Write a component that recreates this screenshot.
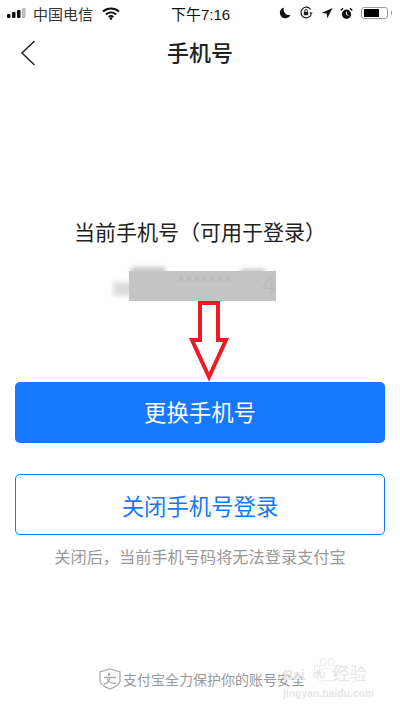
<div class="page">
  <header class="status">
    <div class="side">
      <svg class="signal" width="20" height="12" viewBox="0 0 20 12">
        <rect x="0" y="7" width="3.500" height="4" rx="1" fill="#111"/>
        <rect x="5" y="5" width="3.500" height="6" rx="1" fill="#111"/>
        <rect x="10" y="3" width="3.500" height="8" rx="1" fill="#111"/>
        <rect x="15" y="1" width="3.500" height="10" rx="1" fill="#bbb"/>
      </svg>
      <span class="carrier">中国电信</span>
      <svg class="wifi" width="18" height="13" viewBox="0 0 18 13">
        <path d="M1 4.600C5.600.6 12.400.6 17 4.600M3.900 7.400c3-2.600 7.200-2.600 10.200 0M6.600 10c1.400-1.200 3.400-1.200 4.800 0" fill="none" stroke="#111" stroke-width="2"/>
        <circle cx="9" cy="11.600" r="1.300" fill="#111"/>
      </svg>
    </div>
    <span class="time">下午7:16</span>
    <div class="side right">
      <svg width="12" height="12" viewBox="0 0 12 12"><path d="M5 .5a5.500 5.500 0 1 0 6.500 7.300A5.500 5.500 0 0 1 5 .5z" fill="#111"/></svg>
      <svg class="lock" width="15" height="14" viewBox="0 0 15 14"><path d="M12.200 8.500A5.300 5.300 0 1 1 11.600 3.400" fill="none" stroke="#222" stroke-width="1.200"/><path d="M10.200 6.500h3.600l-1.800 2.300z" fill="#222"/><rect x="4.800" y="5.800" width="4.400" height="3.400" fill="#222"/><path d="M5.700 5.800V4.800a1.300 1.300 0 0 1 2.600 0v1" fill="none" stroke="#222"/></svg>
      <svg width="12" height="12" viewBox="0 0 13 12"><path d="M12.500.5L.5 6l5.500.6.900 5.200z" fill="#111"/></svg>
      <svg width="13" height="13" viewBox="0 0 14 13"><circle cx="7" cy="7.300" r="5" fill="#111"/><path d="M7 4.500v3l2 1" fill="none" stroke="#fff"/><path d="M.8 3.300L3.300.9M13.200 3.300L10.700.9" stroke="#111" stroke-width="1.600"/></svg>
      <div class="battery"><div class="level"></div></div>
      <div class="nub"></div>
    </div>
  </header>

  <nav class="nav">
    <svg class="back" width="16" height="26" viewBox="0 0 16 26"><path d="M14.500 1L2 13l12.500 12" fill="none" stroke="#222" stroke-width="1.500"/></svg>
    <h1>手机号</h1>
  </nav>

  <main class="content">
    <p class="label">当前手机号（可用于登录）</p>
    <div class="masked">
      <div class="smudge left"></div>
      <div class="smudge top"></div>
      <div class="smudge top2"></div>
      <div class="block">
        <span class="stars">*******</span>
        <span class="digit">4</span>
      </div>
    </div>
    <svg class="arrow" width="41" height="84" viewBox="0 0 41 84">
      <path d="M11 3H29V40H37L20 77 3 40H11Z" fill="#fff" stroke="#ed1c24" stroke-width="4"/>
    </svg>
    <button class="btn primary">更换手机号</button>
    <button class="btn outline">关闭手机号登录</button>
    <p class="note">关闭后，当前手机号码将无法登录支付宝</p>
  </main>

  <footer class="foot">
    <svg width="24" height="22" viewBox="0 0 24 22">
      <path d="M12 1l10 3v9c0 3-5 6-10 8C7 19 2 16 2 13V4z" fill="none" stroke="#aaa" stroke-width="1.300"/>
      <circle cx="11" cy="6.500" r="1.400" fill="#aaa"/>
      <path d="M6 9.500h12M12 9.500c-1 4-3 6-6 6.500M9 11c2 3 5 5 9 4" fill="none" stroke="#aaa" stroke-width="1.300"/>
    </svg>
    <span>支付宝全力保护你的账号安全</span>
  </footer>

  <div class="mark">
    <svg class="pawmark" width="30" height="28" viewBox="0 0 30 28">
      <g fill="#fff" stroke="#e9e9e9">
        <ellipse cx="5" cy="12" rx="3" ry="4"/>
        <ellipse cx="11" cy="5" rx="3" ry="4"/>
        <ellipse cx="19" cy="5" rx="3" ry="4"/>
        <ellipse cx="25" cy="12" rx="3" ry="4"/>
        <path d="M15 11c4 0 5 3 8 6 3 4 0 8-4 7-3-.7-5-.7-8 0-4 1-7-3-4-7 3-3 4-6 8-6z"/>
      </g>
    </svg>
    <div class="mark-top"><span>Bai</span><span class="du">du</span><span class="jy">经验</span></div>
    <div class="mark-url">jingyan.baidu.com</div>
  </div>
</div>

<style>
  :global(body) {
    margin: 0;
    background: #fff;
  }
  .page {
    position: relative;
    width: 400px;
    height: 710px;
    overflow: hidden;
    background: #fff;
    font-family: "Noto Sans CJK SC", "Liberation Sans", sans-serif;
    color: #222;
  }
  .status {
    display: flex;
    align-items: center;
    justify-content: space-between;
    height: 26px;
    padding: 0 0 0 7px;
    position: relative;
  }
  .side {
    display: flex;
    align-items: center;
    gap: 6px;
  }
  .side.right {
    gap: 7px;
    padding-right: 8px;
  }
  .lock {
    margin-left: 1px;
  }
  .carrier {
    font-size: 15px;
    color: #333;
  }
  .wifi {
    margin-left: 3px;
  }
  .time {
    position: absolute;
    left: 171px;
    font-family: "Liberation Sans", "Noto Sans CJK SC", sans-serif;
    font-size: 15px;
    color: #111;
  }
  .battery {
    width: 21px;
    height: 8px;
    border: 1px solid #999;
    border-radius: 3px;
    padding: 1px 2px;
    margin-left: 1px;
  }
  .level {
    width: 15px;
    height: 8px;
    background: #000;
  }
  .nub {
    width: 1px;
    height: 4px;
    background: #999;
    margin-left: -4px;
  }
  .nav {
    position: relative;
    height: 50px;
    display: flex;
    align-items: center;
    justify-content: center;
  }
  .back {
    position: absolute;
    left: 20px;
    top: 14px;
  }
  h1 {
    margin: 0;
    font-size: 22px;
    font-weight: 500;
    color: #222;
    line-height: 50px;
  }
  .content {
    position: relative;
    padding: 0 15px;
    display: flex;
    flex-direction: column;
    align-items: center;
  }
  .label {
    margin: 140px 0 0;
    font-size: 21px;
    line-height: 30px;
    color: #222;
  }
  .masked {
    position: relative;
    width: 147px;
    height: 30px;
    margin: 25px 0 0 5px;
  }
  .block {
    position: absolute;
    inset: 0;
    background: #c4c4c4;
    overflow: hidden;
    font-family: "Liberation Sans", sans-serif;
    color: #b6b6b6;
  }
  .stars {
    position: absolute;
    left: 49px;
    top: 1px;
    font-size: 15px;
    line-height: 18px;
    letter-spacing: 2px;
  }
  .digit {
    position: absolute;
    left: 133px;
    top: 0;
    font-size: 25px;
    line-height: 27px;
    color: #bcbcbc;
  }
  .smudge {
    position: absolute;
    background: #ddd;
    filter: blur(2px);
  }
  .smudge.left {
    left: -16px;
    top: 11px;
    width: 30px;
    height: 14px;
  }
  .smudge.top {
    left: 2px;
    top: -4px;
    width: 34px;
    height: 10px;
    background: #c8c8c8;
  }
  .smudge.top2 {
    left: 112px;
    top: -2px;
    width: 24px;
    height: 8px;
    background: #c8c8c8;
  }
  .arrow {
    position: absolute;
    left: 189px;
    top: 224px;
  }
  .btn {
    display: block;
    width: 370px;
    border-radius: 5px;
    font-family: inherit;
    font-size: 22.400px;
    box-sizing: border-box;
    padding: 0;
  }
  .primary {
    height: 61px;
    margin-top: 81px;
    padding-bottom: 4px;
    background: #1677ff;
    border: none;
    color: #fff;
  }
  .outline {
    height: 61px;
    margin-top: 31px;
    background: #fff;
    border: 1.500px solid #1677ff;
    color: #1677ff;
  }
  .note {
    margin: 9px 0 0;
    font-size: 16.200px;
    line-height: 24px;
    color: #999;
  }
  .foot {
    position: absolute;
    left: 98px;
    top: 668px;
    display: flex;
    align-items: center;
    gap: 1px;
    font-size: 14px;
    color: #999;
  }
  .mark {
    position: absolute;
    left: 283px;
    top: 666px;
    width: 92px;
    color: #e6e6e6;
    font-family: "Liberation Sans", "Noto Sans CJK SC", sans-serif;
    font-weight: 700;
  }
  .pawmark {
    position: absolute;
    left: 29px;
    top: -9px;
  }
  .mark-top {
    position: relative;
    display: flex;
    align-items: center;
    font-size: 14px;
    line-height: 18px;
  }
  .du {
    margin: 0 0 0 8px;
    font-size: 10px;
    width: 20px;
  }
  .jy {
    font-size: 17px;
    font-weight: 400;
    white-space: nowrap;
  }
  .mark-url {
    font-size: 10px;
    line-height: 14px;
    margin-top: 3px;
    letter-spacing: 0.200px;
  }
</style>
